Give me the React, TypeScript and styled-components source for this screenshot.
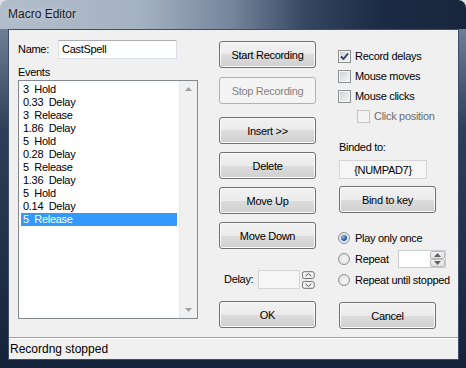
import React from 'react'
import styled, { createGlobalStyle } from 'styled-components'

const GlobalStyle = createGlobalStyle`
  html, body { margin: 0; padding: 0; background: #dfe3e8; }
  body { font-family: "Liberation Sans", Arial, sans-serif; }
`

const events = [
  '3  Hold', '0.33  Delay', '3  Release', '1.86  Delay', '5  Hold', '0.28  Delay',
  '5  Release', '1.36  Delay', '5  Hold', '0.14  Delay', '5  Release',
]

const Window = styled.div`
  width: 466px;
  height: 368px;
  box-sizing: border-box;
  display: flex;
  flex-direction: column;
  border-radius: 8px 8px 0 0;
  overflow: hidden;
  background:
    linear-gradient(to right, #b2bdca 0%, #a5b2c2 30%, #74849b 50%, #34455f 66%, #1c2b44 82%, #18263d 100%) top / 100% 29px no-repeat,
    linear-gradient(to bottom, #7f90a6 0%, #2e3f59 35%, #15233a 100%);
`

const TitleBar = styled.div`
  height: 29px;
  flex: none;
  display: flex;
  align-items: center;
  padding: 0 0 1px 8px;
  box-sizing: border-box;
  font-size: 12px;
  color: #1b1b1b;
  text-shadow: 0 0 6px rgba(255, 255, 255, 0.6);
`

const Client = styled.div`
  flex: 1;
  margin: 0 7px 8px 8px;
  border: 1px solid #3d4e67;
  background: #f0f0f0;
  display: flex;
  flex-direction: column;
  font-size: 11px;
  letter-spacing: -0.3px;
  color: #000;
`

const Main = styled.div`
  flex: 1;
  display: flex;
  padding: 10px 0 0 9px;
`

const LeftColumn = styled.div`
  width: 180px;
  display: flex;
  flex-direction: column;
`

const NameRow = styled.div`
  display: flex;
  align-items: center;
  height: 19px;
`

const Label = styled.span<{ $width?: number; $indent?: number; $top?: number }>`
  display: block;
  height: 13px;
  line-height: 13px;
  white-space: nowrap;
  width: ${p => (p.$width ? `${p.$width}px` : 'auto')};
  padding-left: ${p => p.$indent ?? 0}px;
  margin-top: ${p => p.$top ?? 0}px;
`

const TextBox = styled.div<{ $width: number }>`
  width: ${p => p.$width}px;
  height: 19px;
  box-sizing: border-box;
  background: #fff;
  border: 1px solid #dbdfe6;
  border-top-color: #abadb3;
  padding-left: 3px;
  line-height: 17px;
`

const ListBox = styled.div`
  margin-top: 1px;
  height: 239px;
  box-sizing: border-box;
  border: 1px solid #828790;
  background: #fff;
  display: flex;
`

const Items = styled.div`
  flex: 1;
  padding: 2px 2px 0 2px;
`

const Item = styled.div<{ $selected?: boolean }>`
  height: 13px;
  line-height: 13px;
  padding-left: 2px;
  white-space: pre;
  background: ${p => (p.$selected ? '#3399ff' : 'transparent')};
  color: ${p => (p.$selected ? '#fff' : '#000')};
`

const ScrollBar = styled.div`
  width: 17px;
  background: #f0f0f0;
  border-left: 1px solid #e9e9e9;
  display: flex;
  flex-direction: column;
  justify-content: space-between;
  align-items: center;
  padding: 6px 0 6px;
`

const MidColumn = styled.div`
  width: 97px;
  margin-left: 21px;
  padding-top: 1px;
  display: flex;
  flex-direction: column;
`

const RightColumn = styled.div`
  width: 112px;
  margin-left: 22px;
  padding-top: 6px;
  display: flex;
  flex-direction: column;
`

const Button = styled.button<{ $top?: number; $indent?: number }>`
  width: 97px;
  height: 27px;
  flex: none;
  margin: ${p => p.$top ?? 0}px 0 0 ${p => p.$indent ?? 0}px;
  padding: 0;
  border: 1px solid #707070;
  border-radius: 3px;
  background: linear-gradient(to bottom, #f2f2f2 0%, #ebebeb 50%, #dddddd 50%, #cfcfcf 100%);
  box-shadow: inset 0 0 0 1px #fbfbfb;
  font-family: "Liberation Sans", Arial, sans-serif;
  font-size: 11px;
  letter-spacing: -0.3px;
  color: #000;

  &:disabled {
    border-color: #adb2b5;
    background: #f4f4f4;
    box-shadow: none;
    color: #838383;
  }
`

const DelayRow = styled.div`
  display: flex;
  align-items: center;
  height: 19px;
  margin-top: 21px;
  padding-left: 5px;
`

const DisabledBox = styled.div<{ $width: number; $left?: number; $top?: number }>`
  width: ${p => p.$width}px;
  height: 19px;
  box-sizing: border-box;
  margin: ${p => p.$top ?? 0}px 0 0 ${p => p.$left ?? 0}px;
  border: 1px solid #d5d5d5;
  background: #f6f6f6;
  display: flex;
  align-items: center;
  justify-content: center;
`

const CheckRow = styled.div<{ $indent?: number }>`
  height: 20px;
  display: flex;
  align-items: center;
  gap: 4px;
  white-space: nowrap;
  padding-left: ${p => p.$indent ?? 0}px;
  color: ${p => (p.$indent ? '#6d6d6d' : '#000')};
`

const Box = styled.span<{ $disabled?: boolean }>`
  width: 13px;
  height: 13px;
  box-sizing: border-box;
  flex: none;
  display: flex;
  align-items: center;
  justify-content: center;
  border: 1px solid ${p => (p.$disabled ? '#c4c4c4' : '#8e8f8f')};
  background: ${p =>
    p.$disabled ? '#f4f4f4' : 'linear-gradient(135deg, #c9ccd1 0%, #e6e7e9 55%, #f7f7f7 100%)'};
  box-shadow: inset 0 0 0 1px #f4f4f4;
`

const Spacer = styled.div<{ $height: number }>`
  height: ${p => p.$height}px;
  flex: none;
`

const RadioRow = styled.div`
  height: 21px;
  display: flex;
  align-items: center;
  gap: 5px;
  white-space: nowrap;
`

const Radio = styled.span<{ $on?: boolean }>`
  width: 12px;
  height: 12px;
  flex: none;
  box-sizing: border-box;
  border-radius: 50%;
  border: 1px solid #8e8f8f;
  background: radial-gradient(circle at 60% 60%, #f6f6f6 0%, #dcdcdc 100%);
  display: flex;
  align-items: center;
  justify-content: center;

  &::after {
    content: '';
    display: ${p => (p.$on ? 'block' : 'none')};
    width: 6px;
    height: 6px;
    border-radius: 50%;
    background: radial-gradient(circle at 35% 35%, #9cc3f0 0%, #2a5aa8 55%, #163a78 100%);
  }
`

const Spinner = styled.div`
  margin-left: auto;
  margin-right: 4px;
  width: 48px;
  height: 18px;
  box-sizing: border-box;
  border: 1px solid #c8cbd0;
  background: #fff;
  display: flex;
  justify-content: flex-end;
`

const SpinButtons = styled.div`
  width: 15px;
  display: flex;
  flex-direction: column;
`

const SpinHalf = styled.span`
  flex: 1;
  display: flex;
  align-items: center;
  justify-content: center;
  border: 1px solid #b9b9b9;
  border-radius: 2px;
  background: linear-gradient(to bottom, #f3f3f3, #e1e1e1);
`

const StatusBar = styled.div`
  height: 22px;
  box-sizing: border-box;
  border-top: 1px solid #a0a0a0;
  box-shadow: inset 0 1px 0 #fff;
  display: flex;
  align-items: center;
  padding-left: 1px;
  font-size: 12px;
  letter-spacing: 0;
  color: #000;
`

const Check = () => (
  <svg width="9" height="9" viewBox="0 0 9 9">
    <path d="M1 4.5 L3.5 7 L8 1.5" fill="none" stroke="#2c3a5e" strokeWidth="1.8" />
  </svg>
)

const Arrow = ({ up, color = '#a0a0a0' }: { up?: boolean; color?: string }) => (
  <svg width="7" height="4" viewBox="0 0 7 4">
    <path d={up ? 'M0 4 L3.5 0 L7 4 Z' : 'M0 0 L3.5 4 L7 0 Z'} fill={color} />
  </svg>
)

const DelaySpin = () => (
  <svg width="14" height="18" viewBox="0 0 14 18" style={{ marginLeft: 2 }}>
    <rect x="0.5" y="0.5" width="12" height="7" rx="2" fill="#f2f2f2" stroke="#6e6e6e" />
    <path d="M3.5 5 L6.5 2.5 L9.5 5" fill="none" stroke="#555" />
    <rect x="0.5" y="10.5" width="12" height="7" rx="2" fill="#f2f2f2" stroke="#6e6e6e" />
    <path d="M3.5 13 L6.5 15.5 L9.5 13" fill="none" stroke="#555" />
  </svg>
)

const CheckOption = ({ label, on, indent }: { label: string; on?: boolean; indent?: number }) => (
  <CheckRow $indent={indent}>
    <Box $disabled={!!indent}>{on && <Check />}</Box>
    {label}
  </CheckRow>
)

export default function App() {
  return (
    <>
      <GlobalStyle />
      <Window>
        <TitleBar>Macro Editor</TitleBar>
        <Client>
          <Main>
            <LeftColumn>
              <NameRow>
                <Label $width={40}>Name:</Label>
                <TextBox $width={119}>CastSpell</TextBox>
              </NameRow>
              <Label $top={7}>Events</Label>
              <ListBox>
                <Items>
                  {events.map((e, i) => (
                    <Item key={i} $selected={i === events.length - 1}>{e}</Item>
                  ))}
                </Items>
                <ScrollBar>
                  <Arrow up />
                  <Arrow />
                </ScrollBar>
              </ListBox>
            </LeftColumn>

            <MidColumn>
              <Button>Start Recording</Button>
              <Button $top={9} disabled>Stop Recording</Button>
              <Button $top={13}>Insert &gt;&gt;</Button>
              <Button $top={8}>Delete</Button>
              <Button $top={8}>Move Up</Button>
              <Button $top={8}>Move Down</Button>
              <DelayRow>
                <Label $width={35}>Delay:</Label>
                <DisabledBox $width={43} />
                <DelaySpin />
              </DelayRow>
              <Button $top={12}>OK</Button>
            </MidColumn>

            <RightColumn>
              <CheckOption label="Record delays" on />
              <CheckOption label="Mouse moves" />
              <CheckOption label="Mouse clicks" />
              <CheckOption label="Click position" indent={19} />
              <Label $top={15} $indent={1}>Binded to:</Label>
              <DisabledBox $width={88} $left={1} $top={6}>{'{NUMPAD7}'}</DisabledBox>
              <Button $top={7} $indent={1}>Bind to key</Button>
              <Spacer $height={14} />
              <RadioRow>
                <Radio $on />
                Play only once
              </RadioRow>
              <RadioRow>
                <Radio />
                Repeat
                <Spinner>
                  <SpinButtons>
                    <SpinHalf><Arrow up color="#606060" /></SpinHalf>
                    <SpinHalf><Arrow color="#606060" /></SpinHalf>
                  </SpinButtons>
                </Spinner>
              </RadioRow>
              <RadioRow>
                <Radio />
                Repeat until stopped
              </RadioRow>
              <Button $top={12} $indent={1}>Cancel</Button>
            </RightColumn>
          </Main>
          <StatusBar>Recordng stopped</StatusBar>
        </Client>
      </Window>
    </>
  )
}
